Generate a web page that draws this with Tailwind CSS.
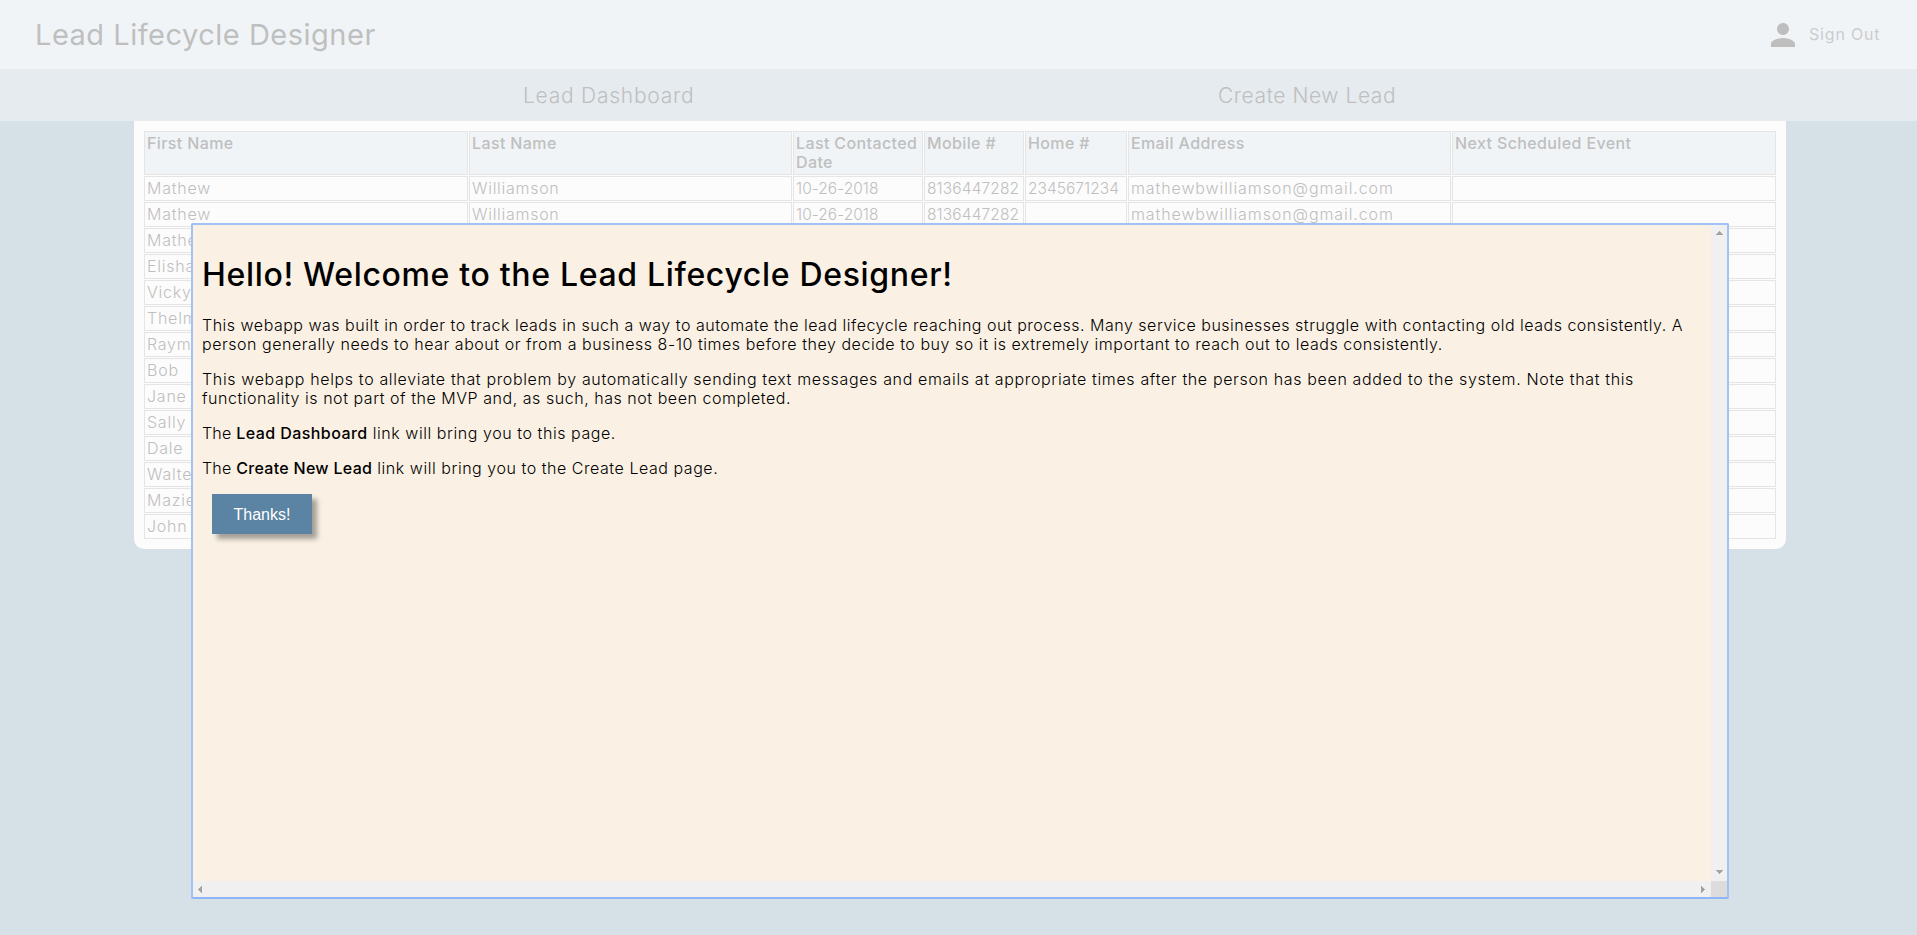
<!DOCTYPE html>
<html lang="en">
<head>
<meta charset="utf-8">
<title>Lead Lifecycle Designer</title>
<script src="https://cdn.jsdelivr.net/npm/@tailwindcss/browser@4"></script>
</head>
<body class="h-[935px] overflow-hidden bg-[#d6e1e7] font-['Inter',sans-serif] text-[#bfbfbf] text-[16px] leading-[19px] font-light">
<header class="flex h-[69px] items-center justify-between bg-[#f0f4f7] pl-[35px] pr-[36px]">
  <h1 class="text-[29px] leading-[34px] font-normal tracking-[0.5px] whitespace-nowrap pt-px">Lead Lifecycle Designer</h1>
  <div class="flex items-center">
    <svg class="size-9" viewBox="0 0 24 24" fill="#bebebe"><path d="M12 12c2.21 0 4-1.79 4-4s-1.79-4-4-4-4 1.79-4 4 1.79 4 4 4zm0 2c-2.67 0-8 1.34-8 4v2h16v-2c0-2.66-5.33-4-8-4z"/></svg>
    <span class="ml-2 w-[72px] font-normal tracking-[0.82px] whitespace-nowrap text-[#cbcdce]">Sign Out</span>
  </div>
</header>
<nav class="flex h-[52px] items-center bg-[#e5ebef] pl-[523px] pt-px text-[21px] leading-[26px] whitespace-nowrap">
  <a class="w-[695px] tracking-[0.75px]">Lead Dashboard</a>
  <a class="tracking-[0.56px]">Create New Lead</a>
</nav>
<main class="ml-[134px] h-[428px] w-[1652px] rounded-b-[10px] bg-[#fcfcfc] p-[10px]">
  <div id="leads" class="grid grid-cols-[324px_323px_130px_100px_102px_323px_324px] grid-rows-[44px] auto-rows-[25px] gap-px"></div>
</main>

<section class="fixed left-[191px] top-[223px] flex h-[676px] w-[1538px] flex-col rounded-[2px] border-2 border-[#a2c1f7] border-b-[#8fb4f8] bg-[#faf1e4] text-black">
  <div class="flex min-h-0 flex-1">
    <div class="flex-1 pl-[9px] pt-[31px] whitespace-nowrap">
      <h2 class="mb-[21px] text-[32px] leading-[38px] pb-px font-medium tracking-[0.67px]">Hello! Welcome to the Lead Lifecycle Designer!</h2>
      <p class="mb-4"><span class="block tracking-[0.504px]">This webapp was built in order to track leads in such a way to automate the lead lifecycle reaching out process. Many service businesses struggle with contacting old leads consistently. A</span><span class="block tracking-[0.536px]">person generally needs to hear about or from a business 8-10 times before they decide to buy so it is extremely important to reach out to leads consistently.</span></p>
      <p class="mb-4"><span class="block tracking-[0.644px]">This webapp helps to alleviate that problem by automatically sending text messages and emails at appropriate times after the person has been added to the system. Note that this</span><span class="block tracking-[0.541px]">functionality is not part of the MVP and, as such, has not been completed.</span></p>
      <p class="mb-4 tracking-[0.56px]"><span class="tracking-[0.2px]">The </span><b class="font-medium tracking-[0.44px]">Lead Dashboard</b> link will bring you to this page.</p>
      <p class="mb-4 tracking-[0.54px]"><span class="tracking-[0.2px]">The </span><b class="font-medium tracking-[0.3px]">Create New Lead</b> link will bring you to the Create Lead page.</p>
      <button class="ml-[10px] block h-10 w-[100px] bg-[#5b83a3] font-['Liberation_Sans',sans-serif] text-[16px] font-normal text-white shadow-[5px_5px_5px_rgba(0,0,0,0.35)]">Thanks!</button>
    </div>
    <div class="flex w-4 flex-col items-center justify-between bg-[#f0f0f0] pt-[6px] pb-[7px]">
      <svg class="h-1 w-[7px]" viewBox="0 0 7 4" fill="#a3a3a3" shape-rendering="crispEdges"><path d="M3 0h1v1h1v1h1v1h1v1H0V3h1V2h1V1h1z"/></svg>
      <svg class="h-1 w-[7px]" viewBox="0 0 7 4" fill="#a3a3a3" shape-rendering="crispEdges"><path d="M3 4h1V3h1V2h1V1h1V0H0v1h1v1h1v1h1z"/></svg>
    </div>
  </div>
  <div class="flex h-4 bg-[#f0f0f0]">
    <div class="flex flex-1 items-center justify-between pl-[5px] pr-[6px]">
      <svg class="h-[7px] w-1" viewBox="0 0 4 7" fill="#a3a3a3" shape-rendering="crispEdges"><path d="M0 3v1h1v1h1v1h1v1h1V0H3v1H2v1H1v1z"/></svg>
      <svg class="h-[7px] w-1" viewBox="0 0 4 7" fill="#a3a3a3" shape-rendering="crispEdges"><path d="M4 3v1H3v1H2v1H1v1H0V0h1v1h1v1h1v1z"/></svg>
    </div>
    <div class="w-4 bg-[#dcdcdc]"></div>
  </div>
</section>
<script>
const heads = ['First Name', 'Last Name', 'Last Contacted<br>Date', 'Mobile #', 'Home #', 'Email Address', 'Next Scheduled Event'];
const person = ['Mathew', 'Williamson', '10-26-2018'];
const rows = [
  [...person, '8136447282', '2345671234', 'mathewbwilliamson@gmail.com', ''],
  [...person, '8136447282', '', 'mathewbwilliamson@gmail.com', ''],
  ...['Mathew', 'Elisha', 'Vicky', 'Thelma', 'Raymond', 'Bob', 'Jane', 'Sally', 'Dale', 'Walter', 'Mazie', 'John'].map(n => [n, '', '', '', '', '', ''])
];
const tracking = ['tracking-[0.76px]', 'tracking-[0.72px]', 'text-[15.5px] tracking-[0.03px]', 'text-[15.5px] tracking-[0.13px]', 'text-[15.5px] tracking-[0.04px]', 'tracking-[0.9px]', ''];
let html = heads.map(h => `<div class="border border-[#e5e5e5] bg-[#f0f4f7] pl-[2px] pt-[2px] font-[450] tracking-[0.38px] whitespace-nowrap">${h}</div>`).join('');
for (const r of rows) html += r.map((c, i) => `<div class="border border-[#e5e5e5] pl-[2px] pt-[2px] whitespace-nowrap ${tracking[i]}">${c}</div>`).join('');
document.getElementById('leads').innerHTML = html;
</script>
</body>
</html>
